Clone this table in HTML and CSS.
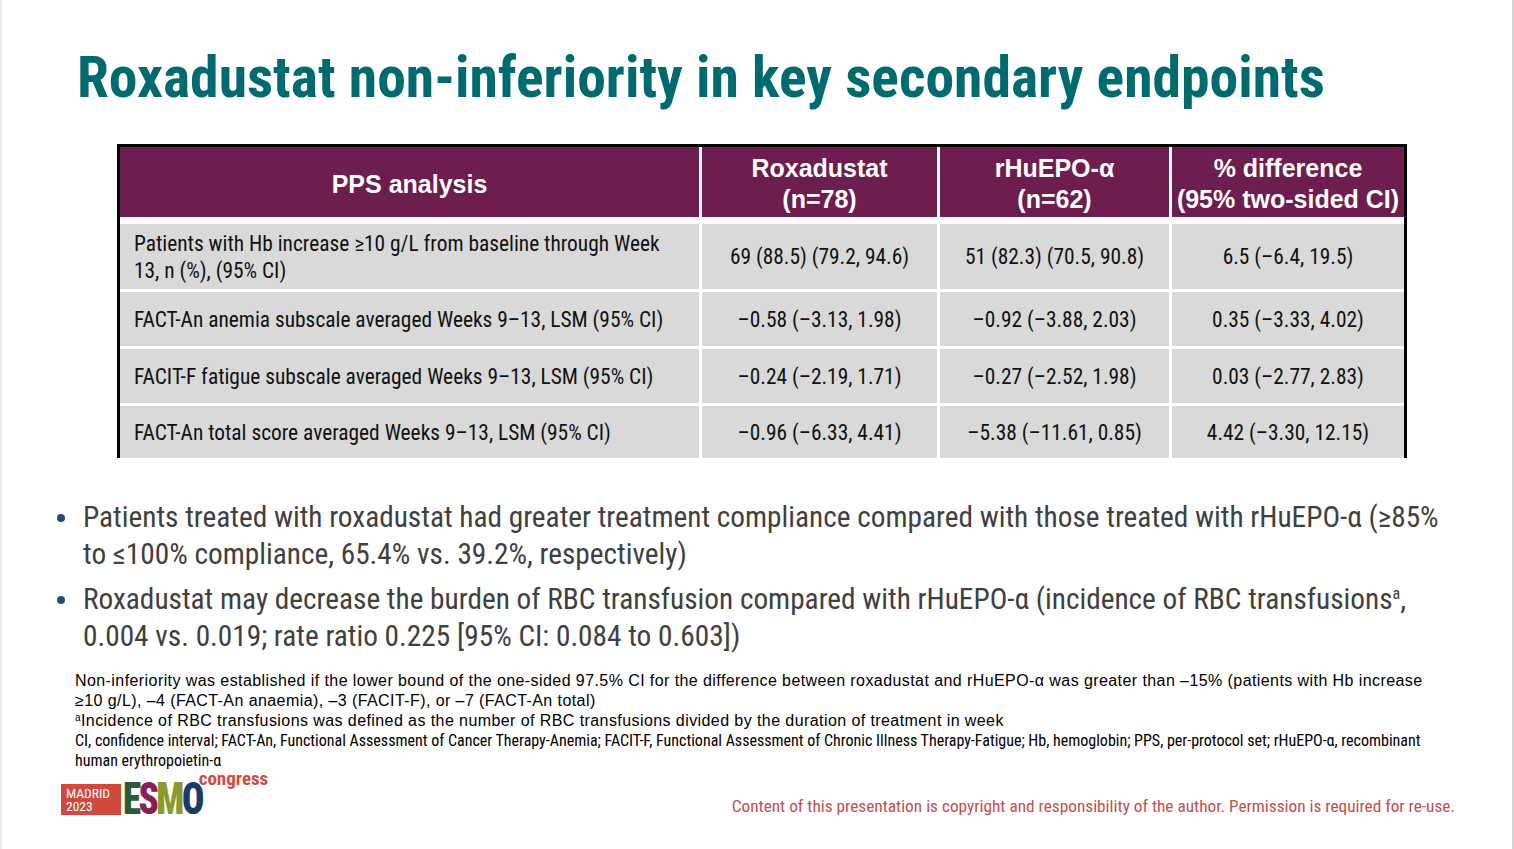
FILE: index.html
```html
<!DOCTYPE html>
<html>
<head>
<meta charset="utf-8">
<link rel="stylesheet" href="styles.css">
</head>
<body>
<div class="slide">
  <h1 class="title">Roxadustat non-inferiority in key secondary endpoints</h1>

  <div class="table">
    <div class="th">PPS analysis</div>
    <div class="th">Roxadustat<br>(n=78)</div>
    <div class="th">rHuEPO-α<br>(n=62)</div>
    <div class="th">% difference<br>(95% two-sided CI)</div>

    <div class="td td-first">Patients with Hb increase ≥10 g/L from baseline through Week 13, n (%), (95% CI)</div>
    <div class="td">69 (88.5) (79.2, 94.6)</div>
    <div class="td">51 (82.3) (70.5, 90.8)</div>
    <div class="td">6.5 (–6.4, 19.5)</div>

    <div class="td td-first">FACT-An anemia subscale averaged Weeks 9–13, LSM (95% CI)</div>
    <div class="td">–0.58 (–3.13, 1.98)</div>
    <div class="td">–0.92 (–3.88, 2.03)</div>
    <div class="td">0.35 (–3.33, 4.02)</div>

    <div class="td td-first">FACIT-F fatigue subscale averaged Weeks 9–13, LSM (95% CI)</div>
    <div class="td">–0.24 (–2.19, 1.71)</div>
    <div class="td">–0.27 (–2.52, 1.98)</div>
    <div class="td">0.03 (–2.77, 2.83)</div>

    <div class="td td-first">FACT-An total score averaged Weeks 9–13, LSM (95% CI)</div>
    <div class="td">–0.96 (–6.33, 4.41)</div>
    <div class="td">–5.38 (–11.61, 0.85)</div>
    <div class="td">4.42 (–3.30, 12.15)</div>
  </div>

  <ul class="bullets">
    <li>Patients treated with roxadustat had greater treatment compliance compared with those treated with rHuEPO-α (≥85% to ≤100% compliance, 65.4% vs. 39.2%, respectively)</li>
    <li>Roxadustat may decrease the burden of RBC transfusion compared with rHuEPO-α (incidence of RBC transfusions<sup>a</sup>, 0.004 vs. 0.019; rate ratio 0.225 [95% CI: 0.084 to 0.603])</li>
  </ul>

  <div class="notes">
    <p>Non-inferiority was established if the lower bound of the one-sided 97.5% CI for the difference between roxadustat and rHuEPO-α was greater than –15% (patients with Hb increase ≥10 g/L), –4 (FACT-An anaemia), –3 (FACIT-F), or –7 (FACT-An total)</p>
    <p><sup>a</sup>Incidence of RBC transfusions was defined as the number of RBC transfusions divided by the duration of treatment in week</p>
    <p class="abbr">CI, confidence interval; FACT-An, Functional Assessment of Cancer Therapy-Anemia; FACIT-F, Functional Assessment of Chronic Illness Therapy-Fatigue; Hb, hemoglobin; PPS, per-protocol set; rHuEPO-α, recombinant human erythropoietin-α</p>
  </div>

  <div class="footer">
    <div class="logo">
      <div class="madrid">MADRID<br>2023</div>
      <div class="esmo"><span class="e">E</span><span class="s">S</span><span class="m">M</span><span class="o">O</span></div>
      <div class="congress">congress</div>
    </div>
    <div class="copyright">Content of this presentation is copyright and responsibility of the author. Permission is required for re-use.</div>
  </div>
</div>
</body>
</html>
```

FILE: styles.css
```css
* { box-sizing: border-box; }
html, body { margin: 0; padding: 0; background: #fff; }
body { width: 1514px; height: 849px; overflow: hidden; }

.slide {
  width: 1514px;
  height: 849px;
  padding-top: 43px;
  border-left: 2px solid #ebebeb;
  border-right: 2px solid #d4d4d4;
  font-family: "Liberation Sans", Arial, sans-serif;
  color: #000;
}

.title, .td, .bullets, .notes .abbr, .madrid, .esmo, .congress, .copyright {
  font-family: "Roboto", "Roboto Condensed", sans-serif;
  font-stretch: 75%;
}

.title {
  margin: 0 0 0 75px;
  height: 70px;
  line-height: 70px;
  font-weight: bold;
  font-size: 57.6px;
  color: #006b6f;
  white-space: nowrap;
}

.table {
  margin: 31px 0 0 115px;
  width: 1290px;
  display: grid;
  grid-template-columns: 579px 235px 229px 232px;
  grid-template-rows: 74px 65px 54px 54px 52px;
  column-gap: 3px;
  row-gap: 3px;
  border-top: 3px solid #000;
  border-left: 3px solid #000;
  border-right: 3px solid #000;
  background: #fff;
}

.th {
  background: #6d1e4f;
  border-bottom: 4px solid #fff;
  color: #fff;
  font-weight: bold;
  font-size: 25px;
  line-height: 31px;
  display: flex;
  align-items: center;
  justify-content: center;
  text-align: center;
  white-space: nowrap;
  padding-top: 4px;
}

.td {
  background: #d9d9d9;
  font-size: 21.4px;
  line-height: 27px;
  color: #111;
  display: flex;
  align-items: center;
  justify-content: center;
  text-align: center;
  white-space: nowrap;
}
.td-first {
  justify-content: flex-start;
  text-align: left;
  padding: 0 20px 0 14px;
  white-space: normal;
}

.bullets {
  list-style: none;
  margin: 41px 0 0 0;
  padding: 0 58px 0 81px;
  font-size: 29.3px;
  line-height: 37px;
  color: #404040;
}
.bullets li { position: relative; margin-bottom: 8px; }
.bullets li:last-child { margin-bottom: 0; }
.bullets li::before {
  content: "";
  position: absolute;
  left: -26px;
  top: 15px;
  width: 8px;
  height: 8px;
  border-radius: 50%;
  background: #1f4e79;
}
.bullets sup { font-size: 16px; line-height: 0; vertical-align: 10px; }

.notes {
  margin: 16px 0 0 73px;
  padding-right: 80px;
  font-size: 16px;
  letter-spacing: 0.42px;
  line-height: 20px;
  color: #000;
}
.notes p { margin: 0; }
.notes sup { font-size: 10px; line-height: 0; vertical-align: 5px; }
.notes .abbr {
  font-size: 16px;
  letter-spacing: 0;
}

.footer {
  display: flex;
  align-items: flex-end;
  justify-content: space-between;
  padding: 0 57px 0 59px;
  margin-top: 0;
}

.logo {
  display: flex;
  align-items: flex-end;
  height: 44px;
}
.madrid {
  width: 60px;
  height: 31px;
  background: #d04a3f;
  color: #fff;
  font-size: 13.5px;
  line-height: 13px;
  padding: 3px 0 0 5px;
}
.esmo {
  margin-left: 2px;
  margin-right: -16px;
  height: 31px;
  display: flex;
  font-weight: 900;
  font-size: 44px;
  line-height: 31px;
  letter-spacing: -3px;
  transform: scaleX(0.84);
  transform-origin: left bottom;
}
.esmo .e { color: #2c5a33; }
.esmo .s { color: #8b1d5b; }
.esmo .m { color: #8a9a2b; }
.esmo .o { color: #1e3a63; }
.congress {
  align-self: flex-start;
  margin-left: -2px;
  color: #d04a3f;
  font-weight: bold;
  font-size: 19px;
  line-height: 16px;
}

.copyright {
  font-size: 17.3px;
  line-height: 20px;
  color: #c0504d;
  margin-bottom: -1px;
}
```
